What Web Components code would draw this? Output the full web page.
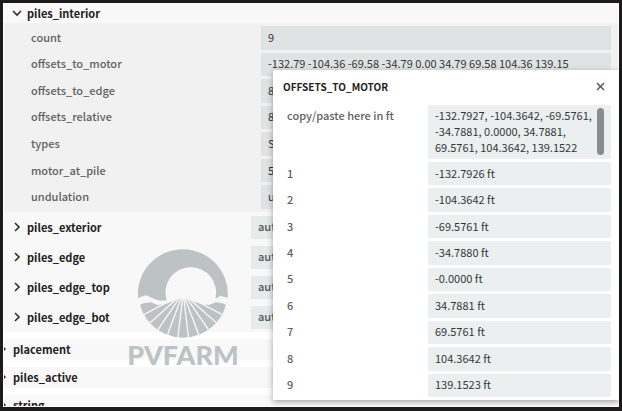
<!DOCTYPE html>
<html lang="en">
<head>
<meta charset="utf-8">
<title>piles_interior</title>
<style>
  body {
    margin: 0;
    background: #1c1a1b;
    font-family: "Noto Sans CJK SC", "Noto Sans", sans-serif;
    font-size: 11px;
    font-weight: 500;
    line-height: 16px;
    color: #5f6263;
  }
</style>
</head>
<body>
<property-window></property-window>

<script>
// Single label + value line
class PropertyRow extends HTMLElement {
  constructor() {
    super();
    this.attachShadow({ mode: 'open' });
  }

  connectedCallback() {
    const label = this.getAttribute('label');
    const value = this.getAttribute('value');
    this.shadowRoot.innerHTML = `
      <style>
        :host {
          display: grid;
          grid-template-columns: var(--label-width, 230px) 1fr;
          align-items: stretch;
        }

        label {
          align-self: center;
          padding-bottom: 2px;
        }

        input {
          box-sizing: border-box;
          width: 100%;
          min-width: 0;
          min-height: 23px;
          padding: 0 7px 2px;
          border: 0;
          border-radius: 0;
          outline: 0;
          background: var(--field, #dfe3e4);
          color: #333738;
          font: inherit;
          font-weight: 400;
        }
      </style>
      <label for="field">${label}</label>
      <input id="field" type="text" value="${value}">
    `;
  }
}

// Collapsible group title, with an optional value on the right
class TreeHeader extends HTMLElement {
  constructor() {
    super();
    this.attachShadow({ mode: 'open' });
  }

  connectedCallback() {
    const label = this.getAttribute('label');
    const value = this.getAttribute('value');
    const open = this.hasAttribute('open');
    const arrow = open ? 'M1 3 5 7 9 3' : 'M3 1 7 5 3 9';
    this.shadowRoot.innerHTML = `
      <style>
        :host {
          display: grid;
          grid-template-columns: 247px 1fr;
          align-items: center;
          min-height: 20px;
          padding: 0 8px 0 0;
          background: #f8f8f8;
        }

        :host([value]) {
          min-height: 30px;
        }

        button {
          display: flex;
          align-items: center;
          gap: 5px;
          padding: 0 0 1px 8px;
          border: 0;
          background: none;
          color: #1f2122;
          font: inherit;
          font-weight: 700;
          cursor: pointer;
        }

        svg {
          width: 10px;
          height: 10px;
          fill: none;
          stroke: #2c2f30;
          stroke-width: 1.6;
        }

        input {
          box-sizing: border-box;
          width: 100%;
          height: 23px;
          padding: 0 7px 2px;
          border: 0;
          background: #e6eaea;
          color: #555859;
          font: inherit;
        }
      </style>
      <button type="button" aria-expanded="${open}">
        <svg viewBox="0 0 10 10" aria-hidden="true"><path d="${arrow}"/></svg>
        ${label}
      </button>
      ${value ? `<input type="text" aria-label="${label}" value="${value}">` : ''}
    `;
  }
}

class TreeSection extends HTMLElement {
  constructor() {
    super();
    this.attachShadow({ mode: 'open' });
    this.shadowRoot.innerHTML = `
      <style>
        :host {
          display: block;
          margin-top: 7px;
          background: #f8f8f8;
        }

        button {
          display: flex;
          align-items: center;
          gap: 7px;
          box-sizing: border-box;
          height: 21px;
          padding: 0 0 2px;
          border: 0;
          background: none;
          color: #1f2122;
          font: inherit;
          font-weight: 700;
          cursor: pointer;
        }

        svg {
          width: 2px;
          height: 6px;
          fill: #2c2f30;
        }
      </style>
      <button type="button">
        <svg viewBox="0 0 2 6" aria-hidden="true"><path d="M0 1 2 3 0 5z"/></svg>
        <slot></slot>
      </button>
    `;
  }
}

class BrandMark extends HTMLElement {
  constructor() {
    super();
    this.attachShadow({ mode: 'open' });
    this.shadowRoot.innerHTML = `
      <style>
        :host {
          display: flex;
          flex-direction: column;
          align-items: center;
          color: #bdc3c5;
          font-family: Lato, sans-serif;
          font-size: 27px;
          font-weight: 900;
          line-height: 34px;
          pointer-events: none;
        }

        svg {
          width: 90px;
          height: 90px;
          fill: currentColor;
        }
      </style>
      <svg viewBox="69 40 270 270" aria-hidden="true">
        <path d="M69 190A135 135 0 1 1 338 190L317 183 301 192A76 76 0 1 0 155 197L136 198 120 194 93 182Z"/>
        <clipPath id="field"><circle cx="204" cy="175" r="134"/></clipPath>
        <g clip-path="url(#field)">
          <path d="M69 214 85 206 108 203 128 211 154 207 174 200 198 182 204 188 210 182 234 200 256 207 282 211 302 203 323 206 339 214V310H69Z"/>
          <path d="M199 180 60 254M199 180 70 296M200 180 104 322M202 180 148 326M204 180 186 330M205 180 223 330M206 180 261 326M208 180 306 322M209 180 340 296M209 180 348 254"
            fill="none" stroke="#f8f8f8" stroke-width="4"/>
        </g>
      </svg>
      <span>PVFARM</span>
    `;
  }
}

// Floating editor with one value per pile
class OffsetsPopup extends HTMLElement {
  constructor() {
    super();
    this.attachShadow({ mode: 'open' });
    this.values = ['-132.7926', '-104.3642', '-69.5761', '-34.7880', '-0.0000', '34.7881', '69.5761', '104.3642', '139.1523'];
  }

  connectedCallback() {
    this.shadowRoot.innerHTML = `
      <style>
        :host {
          display: block;
          box-sizing: border-box;
          padding: 0 8px 3px 14px;
          background: #fff;
          box-shadow: 0 2px 6px rgba(0, 0, 0, 0.35);
          --label-width: 141px;
          --field: #ebeff0;
        }

        header {
          display: flex;
          justify-content: space-between;
          align-items: center;
          box-sizing: border-box;
          height: 35px;
          padding-bottom: 2px;
          margin-left: -4px;
        }

        h2 {
          margin: 0;
          color: #1f2122;
          font-size: 10px;
          font-weight: 700;
        }

        .close {
          display: flex;
          padding: 6px;
          border: 0;
          background: none;
          cursor: pointer;
        }

        .close svg {
          width: 9px;
          height: 9px;
          stroke: #55595a;
          stroke-width: 1.5;
        }

        .paste {
          display: grid;
          grid-template-columns: var(--label-width) 1fr;
          margin-bottom: 3px;
        }

        .paste label {
          padding-top: 2px;
        }

        .box {
          position: relative;
          display: flex;
        }

        textarea {
          box-sizing: border-box;
          width: 100%;
          height: 54px;
          padding: 2px 16px 3px 7px;
          border: 0;
          outline: 0;
          resize: none;
          overflow: hidden;
          background: var(--field);
          color: #333738;
          font: inherit;
          font-weight: 400;
        }

        .thumb {
          position: absolute;
          top: 3px;
          right: 7px;
          bottom: 4px;
          width: 7px;
          border-radius: 4px;
          background: #898c8d;
        }

        .values {
          display: grid;
          grid-auto-rows: 1fr;
          gap: 3px;
          min-height: 235px;
        }
      </style>
      <header>
        <h2>OFFSETS_TO_MOTOR</h2>
        <button class="close" type="button" aria-label="Close">
          <svg viewBox="0 0 9 9" aria-hidden="true"><path d="M1 1 8 8M8 1 1 8"/></svg>
        </button>
      </header>
      <div class="paste">
        <label for="paste">copy/paste here in ft</label>
        <div class="box">
          <textarea id="paste">-132.7927, -104.3642, -69.5761, -34.7881, 0.0000, 34.7881, 69.5761, 104.3642, 139.1522</textarea>
          <div class="thumb"></div>
        </div>
      </div>
      <div class="values">
        ${this.values.map((v, i) => `<property-row label="${i + 1}" value="${v} ft"></property-row>`).join('')}
      </div>
    `;
  }
}

class PropertyWindow extends HTMLElement {
  constructor() {
    super();
    this.attachShadow({ mode: 'open' });
    this.rows = [
      ['count', '9'],
      ['offsets_to_motor', '-132.79 -104.36 -69.58 -34.79 0.00 34.79 69.58 104.36 139.15'],
      ['offsets_to_edge', '8'],
      ['offsets_relative', '8'],
      ['types', 'S'],
      ['motor_at_pile', '5'],
      ['undulation', 'u']
    ];
    this.groups = ['piles_exterior', 'piles_edge', 'piles_edge_top', 'piles_edge_bot'];
    this.sections = ['placement', 'piles_active', 'string'];
  }

  connectedCallback() {
    this.shadowRoot.innerHTML = `
      <style>
        :host {
          position: relative;
          display: block;
          box-sizing: border-box;
          height: 100vh;
          padding: 3px 3px 4px;
        }

        main {
          box-sizing: border-box;
          height: 100%;
          overflow: hidden;
          border: 1px solid #fff;
          border-top: 0;
          background: #fff;
        }

        .rows {
          display: grid;
          grid-auto-rows: 1fr;
          gap: 3px;
          min-height: 183px;
          padding: 3px 7px 3px 27px;
          background: #f1f1f1;
        }

        brand-mark {
          position: absolute;
          top: 248px;
          left: 127px;
          width: 112px;
        }

        offsets-popup {
          position: absolute;
          top: 70px;
          left: 273px;
          right: 3px;
        }
      </style>
      <main>
        <tree-header label="piles_interior" open></tree-header>
        <div class="rows">
          ${this.rows.map(([label, value]) => `<property-row label="${label}" value="${value}"></property-row>`).join('')}
        </div>
        <div class="groups">
          ${this.groups.map(g => `<tree-header label="${g}" value="auto"></tree-header>`).join('')}
        </div>
        ${this.sections.map(s => `<tree-section>${s}</tree-section>`).join('')}
      </main>
      <brand-mark></brand-mark>
      <offsets-popup></offsets-popup>
    `;
  }
}

customElements.define('property-row', PropertyRow);
customElements.define('tree-header', TreeHeader);
customElements.define('tree-section', TreeSection);
customElements.define('brand-mark', BrandMark);
customElements.define('offsets-popup', OffsetsPopup);
customElements.define('property-window', PropertyWindow);
</script>
</body>
</html>
